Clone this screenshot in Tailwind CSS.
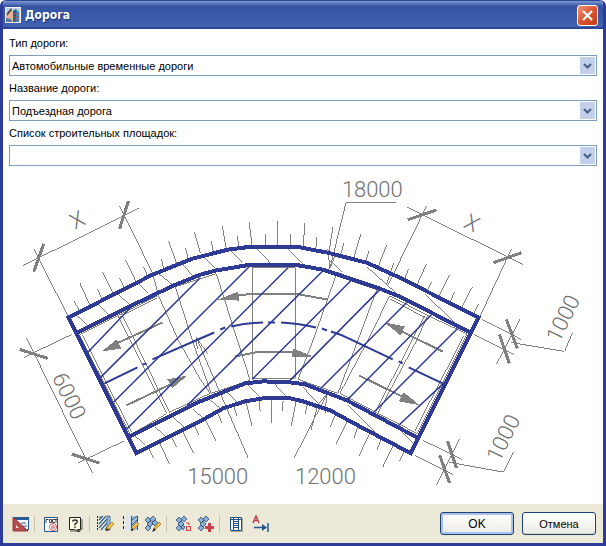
<!DOCTYPE html>
<html lang="ru">
<head>
<meta charset="utf-8">
<meta name="viewport" content="width=device-width, initial-scale=1">
<title>Дорога</title>
<script src="https://cdn.jsdelivr.net/npm/@tailwindcss/browser@4"></script>
</head>
<body class="bg-white font-['Liberation_Sans',Arial,sans-serif] text-[11px] leading-4 text-black">
<main class="flex min-h-screen flex-col overflow-hidden rounded-t-md border-x-3 border-b-3 border-[#2c3c98] bg-white">
  <header class="flex h-[29px] items-center gap-1 border-t border-[#2c4a9c] bg-linear-to-b from-[#7b96d0] via-[#3453a2] via-20% to-[#4263b2] pr-[5px] pl-[2px] shadow-[inset_0_-2px_0_#2d4698]">
    <svg class="size-4" viewBox="0 0 16 16" aria-hidden="true">
      <rect width="16" height="16" fill="#f5f1ea"/><rect x="1" y="1" width="14" height="14" fill="#b9d4ea"/>
      <path d="M1 15V7l5-5 2 2v11z" fill="#e3b59b"/><path d="M2 6l4-5 1 2-5 6z" fill="#5b4840"/><path d="M1 15v-4l5 1 1 3z" fill="#557a9c"/>
      <path d="M8 15V4l3-2v13z" fill="#1f5f96"/><path d="M11 15V2l3 3v10z" fill="#3c88bd"/><path d="M8 7h6M8 10h6M8 13h6" stroke="#a34f52" stroke-width="1"/>
    </svg>
    <h1 class="grow text-xs font-bold text-white [font-family:'DejaVu_Sans_Condensed','Open_Sans',sans-serif] [text-shadow:1px_1px_#1d2f70]">Дорога</h1>
    <button type="button" aria-label="Закрыть" class="flex size-[21px] items-center justify-center rounded-[3px] border border-white bg-linear-to-br from-[#ec9177] via-[#dd5530] to-[#c43a16]">
      <svg class="size-[13px]" viewBox="0 0 13 13" aria-hidden="true"><path d="M2 2l9 9M11 2l-9 9" stroke="#fff" stroke-width="2.2"/></svg>
    </button>
  </header>

  <form class="flex flex-col px-1.5 pt-1.5">
    <label for="type" class="mb-1 text-[11px]">Тип дороги:</label>
    <div class="mb-1 grid h-[21px] items-center">
      <select id="type" class="col-start-1 row-start-1 h-[21px] appearance-none border border-[#7f9db9] bg-white pl-[2px] text-[11px]"><option>Автомобильные временные дороги</option></select>
      <svg class="pointer-events-none col-start-1 row-start-1 mr-[2px] h-[17px] w-[15px] justify-self-end" viewBox="0 0 15 17" aria-hidden="true"><rect width="15" height="17" rx="1" fill="#c3d0ec"/><path d="M4 7l3.500 3.500L11 7" fill="none" stroke="#4d6185" stroke-width="2.200"/></svg>
    </div>
    <label for="name" class="mb-1 text-[11px]">Название дороги:</label>
    <div class="mb-1 grid h-[21px] items-center">
      <select id="name" class="col-start-1 row-start-1 h-[21px] appearance-none border border-[#7f9db9] bg-white pl-[2px] text-[11px]"><option>Подъездная дорога</option></select>
      <svg class="pointer-events-none col-start-1 row-start-1 mr-[2px] h-[17px] w-[15px] justify-self-end" viewBox="0 0 15 17" aria-hidden="true"><rect width="15" height="17" rx="1" fill="#c3d0ec"/><path d="M4 7l3.500 3.500L11 7" fill="none" stroke="#4d6185" stroke-width="2.200"/></svg>
    </div>
    <label for="sites" class="mb-1 text-[11px]">Список строительных площадок:</label>
    <div class="grid h-[21px] items-center">
      <select id="sites" class="col-start-1 row-start-1 h-[21px] appearance-none border border-[#7f9db9] bg-white pl-[2px] text-[11px]"><option></option></select>
      <svg class="pointer-events-none col-start-1 row-start-1 mr-[2px] h-[17px] w-[15px] justify-self-end" viewBox="0 0 15 17" aria-hidden="true"><rect width="15" height="17" rx="1" fill="#c3d0ec"/><path d="M4 7l3.500 3.500L11 7" fill="none" stroke="#4d6185" stroke-width="2.200"/></svg>
    </div>
  </form>

  <div class="flex min-h-0 grow basis-0 justify-center">
  <svg class="h-full w-full" viewBox="3 165 600 339" role="img" aria-label="Схема дороги">
    <!-- paving slabs -->
    <g fill="none" stroke="#808080" stroke-width="1" shape-rendering="crispEdges">
      <path d="M79 334L117 315L166 413L130 434ZM82 335L131 432M117 315L157 295M121 313L169 412M158 295L178 340L200 379L210 393L169 412M175 286L192 340L211 393L250 380L216 273ZM252 267H295V378H252ZM336 275L313 340L298 379L338 393L358 340L377 289ZM338 272L380 287M390 295L368 340L340 393M390 295L428 315L417 340L378 413L340 393M425 315L376 411M428 315L467 333L417 433L378 413M464 336L415 431M118 317L157 297M390 298L425 317"/>
      <!-- soil hatch -->
      <path d="M74 313l12 11M98 304l10 10M117 293l11 10M135 280l13 13M157 272l15 12M182 263l10 12M205 257l11 12M231 250l11 12M257 248l13 14M288 248l15 15M328 258l14 13M367 266l30 27M425 293l30 29"/>
      <path d="M135 436l10 9M155 427l12 11M173 417l14 13M193 409l13 12M208 398l12 10M227 392l10 10M248 385l12 12M273 382l14 15M303 387l20 21M348 405l32 31M400 430l13 12"/>
      <!-- slope ticks -->
      <path d="M73 300l7 12M79 282l10 22M97 288l4 10M102 271l11 22M119 277l5 10M125 259l11 23M143 266l4 9M161 258l2 9M168 240l8 22M185 247l3 11M194 231l6 21M211 240l2 11M222 225l4 23M237 235l2 12M249 221l3 24M265 233v12M277 220v25M291 233l-1 12M305 222l-2 24M317 236l-1 11M333 226l-4 26M344 242l-3 11M361 233l-7 24M369 250l-3 11M387 244l-9 23M394 262l-7 21M409 268l-4 10M427 263l-10 22M432 281l-5 10M450 274l-11 22M455 291l-4 10M473 286l-11 21M479 303l-5 10"/>
      <path d="M148 448l5 10M159 442l10 22M171 436l5 11M182 430l11 23M193 424l6 11M205 419l11 22M217 412l5 11M234 407l3 9M246 402l6 24M259 401l1 10M271 400v23M283 401l-1 10M296 402l-5 24M308 402l-3 12M317 408l-6 22M335 416l-5 11M347 422l-11 22M358 427l-4 11M370 433l-11 23M382 438l-5 12M393 446l-10 21M404 452l-4 9"/>
      <!-- dimension, extension and leader lines -->
      <path d="M22 265L139 207M33 248L67 315M119 205L152 272L158 295M407 206L524 264M427 205L388 285M512 248L481 315M26 338L92 473M23 357L71 334M77 463L123 441"/>
      <path d="M483 319L522 339M475 334L515 354M521 318L497 364M512 342L565 351L573 332M423 440L462 459M415 455L453 474M460 439L437 485M449 462L504 472L514 452"/>
      <path d="M396 202H346L330 268L328 248M330 268L335 255M248 458L196 337L197 349M196 337L208 354M294 458L327 394L325 413M327 394L314 408"/>
    </g>
    <!-- dimension strokes and traffic arrows -->
    <g fill="none" stroke="#808080" stroke-width="3" shape-rendering="crispEdges">
      <path d="M33 271L43 243M119 228L128 200M408 219L437 209M494 262L522 252M19 349L47 358M71 454L99 463M507 319L518 348M500 334L510 363M448 441L457 468M440 455L450 483"/>
      <path stroke-width="2" d="M116 343L162 322M126 405L170 384M236 295L253 293H295L328 299M235 356L255 352H295M400 330L443 351M359 375L402 396"/>
    </g>
    <g fill="#808080" shape-rendering="crispEdges">
      <path d="M101 351L116 339L121 348ZM187 375L167 379L172 388ZM218 299L238 291L239 300ZM313 356L293 348L292 357ZM385 322L405 326L401 335ZM420 405L404 392L399 401Z"/>
    </g>
    <!-- carriageway hatch and axis -->
    <g fill="none" stroke="#2e3a94">
      <path stroke-width="1.5" d="M133 304L87 352M200 277L100 377M249 266L113 402M288 267L126 429M323 270L187 405M353 278L252 379M380 289L290 380M407 302L320 389M432 314L347 400M458 328L373 413M446 381L398 426"/>
      <path stroke-width="2" d="M104 383L137 367M142 364L146 363M152 359L200 338L214 332M220 329L225 327M231 326Q248 322 263 322M268 322H275M281 322Q300 323 316 327M322 328L327 330M331 331Q342 334 353 340L393 359M399 361L403 363M409 367L443 383"/>
    </g>
    <!-- kerbs -->
    <g fill="none" stroke="#2e3a94" stroke-width="4" shape-rendering="crispEdges">
      <path d="M68 317L152 274L192 258L227 249L250 246H297L328 252L367 262L400 277L479 317L411 453L367 430L330 410L303 401L290 398H263L245 401L223 408L200 421L136 453Z"/>
      <path d="M77 332L133 304L173 285L200 274L215 270L250 264H295L323 269L380 288L400 296L471 332M128 437L200 401L220 393L245 383L263 381L290 382L305 384L347 400L400 428L417 437"/>
    </g>
    <g fill="#707070" class="text-[22px] font-light [font-family:Roboto,'Open_Sans',sans-serif]">
      <text x="342" y="196">18000</text>
      <text x="187" y="484">15000</text>
      <text x="295" y="484">12000</text>
      <text transform="translate(51 377) rotate(64)">6000</text>
      <text transform="translate(560 343) rotate(-64)">1000</text>
      <text transform="translate(500 463) rotate(-64)">1000</text>
      <text text-anchor="middle" transform="translate(80 226) rotate(-27)">X</text>
      <text text-anchor="middle" transform="translate(469 229) rotate(27)">X</text>
    </g>
  </svg>
  </div>

  <footer class="flex h-[39px] items-center bg-[#ece9d8] pr-[7px] pl-[9px]">
    <div class="flex grow items-center gap-2" role="toolbar">
      <button type="button" aria-label="Параметры" class="size-[18px]"><svg viewBox="0 0 18 18" aria-hidden="true"><rect x="2.500" y="2.500" width="14" height="12" fill="#fff" stroke="#285a92"/><path d="M2 3.500h15" stroke="#285a92" stroke-width="3"/><path d="M9 8h5M11 11h4" stroke="#285a92"/><path d="M1 2v14h15z" fill="#b44a4c" stroke="#963c40"/><path d="M4 10v3h3z" fill="#ece9d8"/></svg></button>
      <span class="-ml-1 h-[18px] w-px bg-[#c9c6b4]"></span>
      <button type="button" aria-label="ГОСТ" class="size-4"><svg viewBox="0 0 16 16" aria-hidden="true"><path d="M1.500 1.500h13v14h-13z" fill="#fff" stroke="#24568c"/><path d="M3 7V3.500h2.500M6.500 3.500v3h2v-3zM12 3.500H9.500v3H12M11 3.500h3M13 3.500V7" fill="none" stroke="#333" stroke-width=".9"/><circle cx="10" cy="11" r="3.500" fill="#fff" stroke="#c4545c"/><circle cx="10" cy="11" r="1.300" fill="none" stroke="#c4545c"/></svg></button>
      <button type="button" aria-label="Справка" class="size-4"><svg viewBox="0 0 16 16" aria-hidden="true"><path d="M3 15h10v-2h2V3" fill="none" stroke="#8c8974" stroke-width="1.500"/><path d="M2.500 1.500h11v12h-3l2 2.500-5-2.500h-5z" fill="#fffde6" stroke="#222"/><path d="M5.500 5.500q.3-1.500 2.500-1.500t2.300 1.700q0 1-2.300 2.300v1.500M8 10.500v1.500" fill="none" stroke="#222" stroke-width="1.300"/></svg></button>
      <span class="-mx-0.5 h-[18px] w-px bg-[#c9c6b4]"></span>
      <button type="button" aria-label="Штриховка" class="size-[18px]"><svg viewBox="0 0 18 18" aria-hidden="true"><path d="M1.500 1v15" stroke="#222" stroke-dasharray="2 1"/><path d="M3 2h3M3 5L7 1M3 9l7-8M3 13l8-9M5 15l6-7M9 15l2-3" fill="none" stroke="#35658f" stroke-width="1.200"/><path d="M11 1h3v14h-3z" fill="#9dbfe0" stroke="#35658f" stroke-width=".8"/><path d="M10 16l1-4 5-5 2 2-5 5z" fill="#f5c33c" stroke="#8b651f" stroke-width=".6"/><path d="M10 16l1-3 2 2z" fill="#222"/></svg></button>
      <button type="button" aria-label="Граница" class="size-[18px]"><svg viewBox="0 0 18 18" aria-hidden="true"><path d="M1.500 1v15" stroke="#222" stroke-dasharray="3 2"/><path d="M4 1h5v14H4z" fill="#dce6ee"/><path d="M9 1h7v14H9z" fill="#a6c4df"/><path d="M9.500 1v14M15.500 1v14M10 5l5-4M10 10l5-5" stroke="#28568a"/><path d="M9 16l1-4 5-5 2 2-5 5z" fill="#f5c33c" stroke="#8b651f" stroke-width=".6"/><path d="M9 16l1-3 2 2z" fill="#222"/></svg></button>
      <button type="button" aria-label="Правка плит" class="-ml-1 size-[18px]"><svg viewBox="0 0 18 18" aria-hidden="true"><g fill="#8fb0d2" stroke="#28507d" stroke-width=".8"><path d="M1 5l3-3 3 3-3 3zM6 4l3-3 3 3-3 3zM3 9l3-3 3 3-3 3zM8 8l3-3 3 3-3 3zM1 13l3-3 3 3-3 3z"/></g><path d="M9 16l1-3 5-6 2 2-5 5z" fill="#f5c33c" stroke="#8b651f" stroke-width=".6"/><path d="M8 17l2-4 2 2z" fill="#222"/></svg></button>
      <span class="-mx-1 h-[18px] w-px bg-[#c9c6b4]"></span>
      <button type="button" aria-label="Выбор плит" class="ml-1 size-[18px]"><svg viewBox="0 0 18 18" aria-hidden="true"><g fill="#8fb0d2" stroke="#28507d" stroke-width=".8"><path d="M1 5l3-3 3 3-3 3zM6 4l3-3 3 3-3 3zM3 9l3-3 3 3-3 3zM1 13l3-3 3 3-3 3zM6 12l2-2 2 2-2 3z"/></g><path d="M11.500 11.500h4v4h-4zM11 8h3v2" fill="#f1d9cd" stroke="#c84b50" stroke-width="1.200"/></svg></button>
      <button type="button" aria-label="Добавить плиты" class="-ml-1 size-[18px]"><svg viewBox="0 0 18 18" aria-hidden="true"><g fill="#8fb0d2" stroke="#28507d" stroke-width=".8"><path d="M1 5l3-3 3 3-3 3zM6 4l3-3 3 3-3 3zM3 9l3-3 3 3-3 3zM1 13l3-3 3 3-3 3z"/></g><path d="M12.500 8v9M8 12.500h9" stroke="#c5404a" stroke-width="3"/></svg></button>
      <span class="-mx-1 h-[18px] w-px bg-[#c9c6b4]"></span>
      <button type="button" aria-label="Таблица" class="ml-1 size-4"><svg viewBox="0 0 16 16" aria-hidden="true"><path d="M3 2h12v14H3z" fill="#aaa792"/><path d="M2.500 1.500h11v13h-11z" fill="#fff" stroke="#1f4e86"/><path d="M5.500 1v14M10.500 1v14M2 3.500h12M5 5.500h6M5 7.500h6M5 9.500h6M5 11.500h6" stroke="#1f4e86"/></svg></button>
      <button type="button" aria-label="Выноска" class="size-[18px]"><svg viewBox="0 0 18 18" aria-hidden="true"><path d="M1 8l3-7 3 7M2 5.500h4" fill="none" stroke="#b8414a" stroke-width="1.500"/><path d="M2 12.500h12M16 8v9" stroke="#24568c" stroke-width="1.500"/><path d="M10 9l5 3.500-5 3.500z" fill="#24568c"/></svg></button>
    </div>
    <div class="flex gap-2">
      <button type="button" class="h-[23px] w-[74px] rounded-[3px] border border-[#1c4272] bg-linear-to-b from-white to-[#ecebe5] text-xs shadow-[inset_0_0_0_2px_#a9c1ec]">OK</button>
      <button type="button" class="h-[23px] w-[74px] rounded-[3px] border border-[#1c4272] bg-linear-to-b from-white to-[#ecebe5] text-[11px] shadow-[inset_0_-1px_0_#d6d0c5]">Отмена</button>
    </div>
  </footer>
</main>
</body>
</html>
